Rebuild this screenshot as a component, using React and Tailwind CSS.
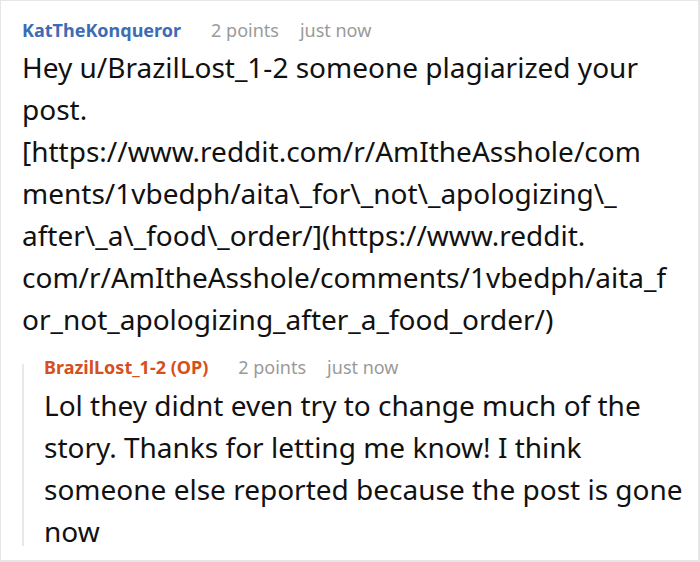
import React from 'react';

const font = { fontFamily: '"Noto Sans", "Open Sans", sans-serif' };

const MetaRow = ({ author, authorClass, points, time }) => (
  <div className="flex items-center text-[18px] leading-[24px]">
    <span className={`font-bold ${authorClass}`}>{author}</span>
    <span className="ml-[30px] text-[#9a9a9a]">{points}</span>
    <span className="ml-[21px] text-[#9a9a9a]">{time}</span>
  </div>
);

const App = () => {
  return (
    <div
      className="w-[700px] h-[562px] bg-white border-t border-l border-r-2 border-b-2 border-[#e6e6e6] pl-[21px] pt-[17px] overflow-hidden"
      style={font}
    >
      {/* Parent comment */}
      <MetaRow author="KatTheKonqueror" authorClass="text-[#3d6cb5]" points="2 points" time="just now" />
      <p className="mt-[4px] text-[28px] leading-[42px] text-[#111] whitespace-nowrap">
        Hey u/BrazilLost_1-2 someone plagiarized your
        <br />
        post.
        <br />
        [https://www.reddit.com/r/AmItheAsshole/com
        <br />
        ments/1vbedph/aita\_for\_not\_apologizing\_
        <br />
        after\_a\_food\_order/](https://www.reddit.
        <br />
        com/r/AmItheAsshole/comments/1vbedph/aita_f
        <br />
        or_not_apologizing_after_a_food_order/)
      </p>

      {/* Reply */}
      <div className="flex mt-[15px]">
        <div className="w-[2px] bg-[#e8e8e8] mt-[9px] mb-[6px]" />
        <div className="pl-[20px]">
          <MetaRow author="BrazilLost_1-2 (OP)" authorClass="text-[#d4501c]" points="2 points" time="just now" />
          <p className="mt-[5px] text-[28px] leading-[42px] text-[#111] whitespace-nowrap">
            Lol they didnt even try to change much of the
            <br />
            story. Thanks for letting me know! I think
            <br />
            someone else reported because the post is gone
            <br />
            now
          </p>
        </div>
      </div>
    </div>
  );
};

export default App;
